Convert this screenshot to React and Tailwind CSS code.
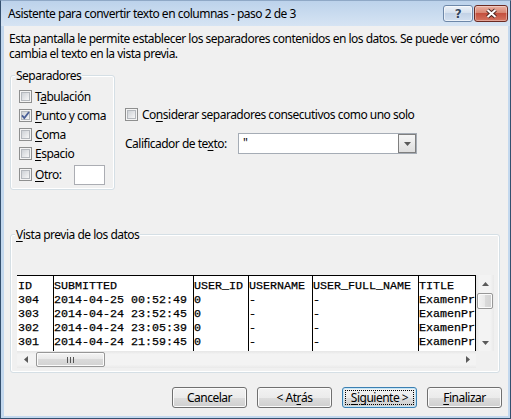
import React from 'react';

// Windows 7 style "Text to columns" wizard, step 2 of 3
const UI = "font-['Segoe_UI','Noto_Sans',sans-serif] text-[12px] tracking-[-0.5px] text-black";
const MONO = "font-['Courier_New','Liberation_Mono',monospace] text-[11.67px] tracking-[0px] [-webkit-text-stroke:0.25px_#000]";

const separators = [
  { pre: 'T', key: 'a', post: 'bulación', checked: false },
  { pre: '', key: 'P', post: 'unto y coma', checked: true },
  { pre: '', key: 'C', post: 'oma', checked: false },
  { pre: '', key: 'E', post: 'spacio', checked: false },
];

const columns = [
  { w: 'w-[36px]', cells: ['ID', '304', '303', '302', '301'] },
  { w: 'w-[140px]', cells: ['SUBMITTED', '2014-04-25 00:52:49', '2014-04-24 23:52:45', '2014-04-24 23:05:39', '2014-04-24 21:59:45'] },
  { w: 'w-[55px]', cells: ['USER_ID', '0', '0', '0', '0'] },
  { w: 'w-[64px]', cells: ['USERNAME', '-', '-', '-', '-'] },
  { w: 'w-[106px]', cells: ['USER_FULL_NAME', '-', '-', '-', '-'] },
];

const titleCells = ['TITLE', 'ExamenPrueba', 'ExamenPrueba', 'ExamenPrueba', 'ExamenPrueba'];

const Key = ({ children }) => <span className="underline underline-offset-[2px]">{children}</span>;

function CheckBox({ checked = false }) {
  return (
    <svg width="13" height="13" viewBox="0 0 13 13" className="shrink-0">
      <defs>
        <linearGradient id="cb-fill" x1="0" y1="0" x2="1" y2="1">
          <stop offset="0" stopColor="#cbcfd4" />
          <stop offset="1" stopColor="#f9f9f9" />
        </linearGradient>
      </defs>
      <rect x="0.5" y="0.5" width="12" height="12" fill="#f4f4f4" stroke="#8e8f8f" />
      <rect x="2.5" y="2.5" width="8" height="8" fill="url(#cb-fill)" stroke="#b4b8bd" />
      {checked && <path d="M3 6.4 L5.3 9 L10 3" fill="none" stroke="#4a5f97" strokeWidth="1.8" />}
    </svg>
  );
}

function Arrow({ dir }) {
  const paths = {
    up: 'M3.5 0 L7 4 L0 4Z',
    down: 'M0 0 L7 0 L3.5 4Z',
    left: 'M0 3.5 L4 0 L4 7Z',
    right: 'M0 0 L4 3.5 L0 7Z',
  };
  const vertical = dir === 'up' || dir === 'down';
  return (
    <svg width={vertical ? 7 : 4} height={vertical ? 4 : 7} viewBox={vertical ? '0 0 7 4' : '0 0 4 7'}>
      <path d={paths[dir]} fill="#5a5a5a" />
    </svg>
  );
}

function Button({ children, focused = false }) {
  return (
    <button
      className={`w-[75px] h-[21px] rounded-[3px] border p-[2px] flex bg-[linear-gradient(#f2f2f2,#ebebeb_50%,#dddddd_50%,#cfcfcf)] ${
        focused
          ? 'border-[#3c7fb1] shadow-[inset_0_0_0_1px_#c4e6f8]'
          : 'border-[#707070] shadow-[inset_0_0_0_1px_#fbfbfb]'
      }`}
    >
      <span
        className={`flex-1 flex items-center justify-center leading-[14px] whitespace-pre border ${
          focused ? 'border-dotted border-black' : 'border-transparent'
        }`}
      >
        {children}
      </span>
    </button>
  );
}

export default function App() {
  return (
    <div className={`${UI} w-[511px] h-[419px] flex flex-col bg-[#c3d8ee] border-x border-b border-[#34506f] border-t border-t-[#8fa8c6]`}>
      {/* title bar */}
      <div className="h-[25px] flex items-start bg-[linear-gradient(#bcd2eb,#d6e4f3)]">
        <span className="ml-[7px] mt-[5px] leading-[16px] whitespace-nowrap">
          Asistente para convertir texto en columnas - paso 2 de 3
        </span>
        <div className="ml-auto mr-[2px] mt-[4px] flex gap-[1px]">
          <div className="w-[30px] h-[17px] rounded-[3px] border border-[#6d87a8] bg-[linear-gradient(#edf2f8,#d6e1ee_45%,#c2d2e6_50%,#d3e0f0)] shadow-[inset_0_0_0_1px_rgba(255,255,255,0.55)] flex items-center justify-center">
            <span className="font-['DejaVu_Sans',sans-serif] font-bold text-[12px] leading-[12px] text-[#33465f] [text-shadow:0_0_2px_#fff]">?</span>
          </div>
          <div className="w-[34px] h-[17px] rounded-[3px] border border-[#6b2a22] bg-[linear-gradient(#eab0a2,#d88672_45%,#c4503e_50%,#d57460)] shadow-[inset_0_0_0_1px_rgba(255,255,255,0.35)] flex items-center justify-center">
            <svg width="13" height="11" viewBox="0 0 13 11">
              <path d="M2.5 2 L10.5 9 M10.5 2 L2.5 9" stroke="#4d2520" strokeWidth="4" />
              <path d="M2.5 2 L10.5 9 M10.5 2 L2.5 9" stroke="#ffffff" strokeWidth="2" />
            </svg>
          </div>
        </div>
      </div>

      {/* client area */}
      <div className="flex-1 ml-[3px] mr-[2px] mb-[2px] bg-[#f0f0f0] flex flex-col">
        <p className="mt-[5px] ml-[5px] leading-[15px] whitespace-nowrap">
          Esta pantalla le permite establecer los separadores contenidos en los datos. Se puede ver cómo
          <br />
          cambia el texto en la vista previa.
        </p>

        <div className="mt-[14px] ml-[6px] flex items-start">
          {/* Separadores */}
          <div className="relative w-[105px] h-[115px] rounded-[3px] border border-[#d5dfe5] shadow-[inset_0_0_0_1px_#fff] pt-[11px] pl-[8px] pr-[9px] flex flex-col">
            <span className="absolute -top-[8px] left-[4px] px-[1px] bg-[#f0f0f0] leading-[16px] whitespace-nowrap">Separadores</span>
            {separators.map((s) => (
              <div key={s.post} className="h-[19px] flex items-center gap-[3px] whitespace-nowrap">
                <CheckBox checked={s.checked} />
                <span className="leading-[15px]">
                  {s.pre}
                  <Key>{s.key}</Key>
                  {s.post}
                </span>
              </div>
            ))}
            <div className="mt-[1px] h-[21px] flex items-center gap-[3px] whitespace-nowrap">
              <CheckBox />
              <span className="leading-[15px]">
                <Key>O</Key>tro:
              </span>
              <div className="ml-auto w-[31px] h-[20px] bg-white border border-[#abadb3]" />
            </div>
          </div>

          {/* right options */}
          <div className="ml-[10px] flex flex-col">
            <div className="mt-[30px] h-[19px] flex items-center gap-[4px] whitespace-nowrap">
              <CheckBox />
              <span className="leading-[15px]">
                Co<Key>n</Key>siderar separadores consecutivos como uno solo
              </span>
            </div>
            <div className="mt-[9px] h-[21px] flex items-center">
              <span className="w-[113px] leading-[15px] whitespace-nowrap">
                Calificador de te<Key>x</Key>to:
              </span>
              <div className="w-[179px] h-[21px] bg-white border border-[#a5acb5] flex">
                <span className="flex-1 pl-[4px] leading-[17px]">"</span>
                <div className="w-[18px] h-full border border-[#7f7f7f] bg-[linear-gradient(#f6f6f6,#dedede)] flex items-center justify-center">
                  <Arrow dir="down" />
                </div>
              </div>
            </div>
          </div>
        </div>

        {/* Vista previa */}
        <div className="relative mt-[44px] ml-[6px] w-[490px] h-[139px] rounded-[3px] border border-[#d5dfe5] shadow-[inset_0_0_0_1px_#fff] pt-[40px] pl-[6px]">
          <span className="absolute -top-[8px] left-[4px] px-[1px] bg-[#f0f0f0] leading-[16px] whitespace-nowrap">
            <Key>V</Key>ista previa de los datos
          </span>
          <div className="flex">
            <div className="flex flex-col">
              <div className={`${MONO} w-[459px] h-[76px] bg-white border-t border-r border-black pl-[1px] flex overflow-hidden`}>
                {columns.map((c) => (
                  <div key={c.cells[0]} className={`${c.w} shrink-0 border-r border-black pt-[3px] flex flex-col`}>
                    {c.cells.map((cell, i) => (
                      <span key={i} className="h-[14px] leading-[14px] whitespace-pre overflow-hidden">
                        {cell}
                      </span>
                    ))}
                  </div>
                ))}
                <div className="flex-1 pt-[3px] flex flex-col overflow-hidden">
                  {titleCells.map((cell, i) => (
                    <span key={i} className="h-[14px] leading-[14px] whitespace-pre">
                      {cell}
                    </span>
                  ))}
                </div>
              </div>
              {/* horizontal scrollbar */}
              <div className="w-[459px] h-[17px] bg-[linear-gradient(#e6e6e6,#f3f3f3_20%,#f3f3f3_80%,#e9e9e9)] flex items-center">
                <div className="w-[17px] h-full flex items-center justify-center">
                  <Arrow dir="left" />
                </div>
                <div className="ml-[2px] w-[69px] h-[15px] rounded-[2px] border border-[#979797] bg-[linear-gradient(#f4f4f4,#e8e8e8_50%,#dadada_50%,#d2d2d2)] shadow-[inset_0_0_0_1px_#fbfbfb] flex items-center justify-center gap-[2px]">
                  <span className="w-[1px] h-[6px] bg-[#555]" />
                  <span className="w-[1px] h-[6px] bg-[#555]" />
                  <span className="w-[1px] h-[6px] bg-[#555]" />
                </div>
                <div className="ml-auto w-[17px] h-full flex items-center justify-center">
                  <Arrow dir="right" />
                </div>
              </div>
            </div>
            <div className="flex flex-col">
              {/* vertical scrollbar */}
              <div className="w-[18px] h-[76px] bg-[linear-gradient(to_right,#e6e6e6,#f3f3f3_20%,#f3f3f3_80%,#e9e9e9)] flex flex-col items-center">
                <div className="h-[17px] w-full flex items-center justify-center">
                  <Arrow dir="up" />
                </div>
                <div className="mt-[1px] w-[16px] h-[16px] rounded-[2px] border border-[#979797] bg-[linear-gradient(to_right,#f4f4f4,#e8e8e8_50%,#dadada_50%,#d2d2d2)] shadow-[inset_0_0_0_1px_#fbfbfb]" />
                <div className="mt-auto h-[17px] w-full flex items-center justify-center">
                  <Arrow dir="down" />
                </div>
              </div>
              <div className="w-[18px] h-[17px] bg-[#f0f0f0]" />
            </div>
          </div>
        </div>

        {/* buttons */}
        <div className="mt-[14px] pr-[6px] flex justify-end gap-[10px]">
          <Button>Cancelar</Button>
          <Button>
            {'< At'}
            <Key>r</Key>
            {'ás'}
          </Button>
          <Button focused>
            <Key>S</Key>
            {'iguiente >'}
          </Button>
          <Button>
            <Key>F</Key>inalizar
          </Button>
        </div>
      </div>
    </div>
  );
}
